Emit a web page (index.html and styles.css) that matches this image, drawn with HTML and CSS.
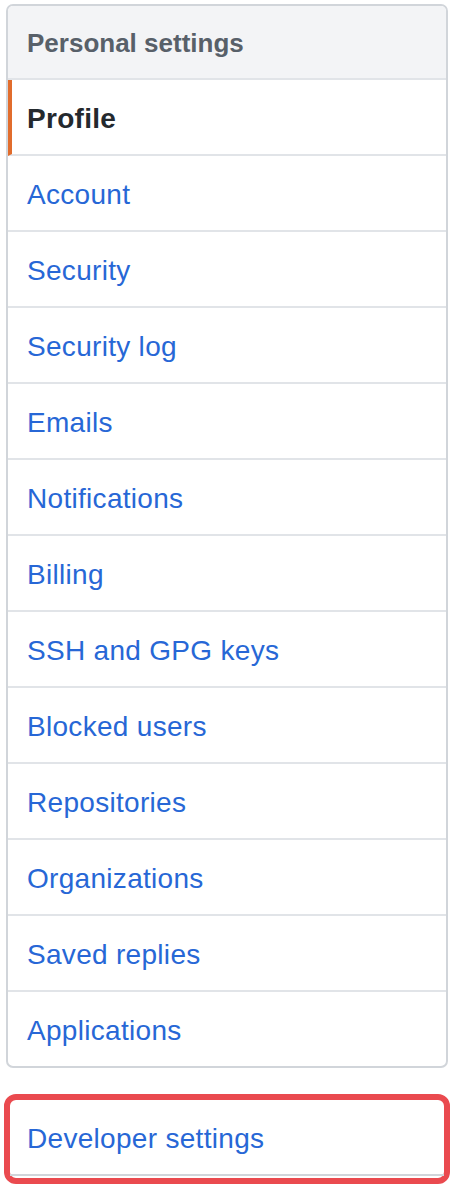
FILE: index.html
```html
<!DOCTYPE html>
<html lang="en">

<head>
    <meta charset="UTF-8">
    <meta name="viewport" content="width=device-width, initial-scale=1.0">
    <title>
        Settings menu
    </title>
    <link rel="stylesheet" href="styles.css">
</head>
<body>
<nav class="menu">
  <h3 class="menu-heading">Personal settings</h3>
  <a class="menu-item selected" href="#">Profile</a>
  <a class="menu-item" href="#">Account</a>
  <a class="menu-item" href="#">Security</a>
  <a class="menu-item" href="#">Security log</a>
  <a class="menu-item" href="#">Emails</a>
  <a class="menu-item" href="#">Notifications</a>
  <a class="menu-item" href="#">Billing</a>
  <a class="menu-item" href="#">SSH and GPG keys</a>
  <a class="menu-item" href="#">Blocked users</a>
  <a class="menu-item" href="#">Repositories</a>
  <a class="menu-item" href="#">Organizations</a>
  <a class="menu-item" href="#">Saved replies</a>
  <a class="menu-item" href="#">Applications</a>
</nav>

<div class="highlight">
  <a class="menu-item dev" href="#">Developer settings</a>
</div>
</body>
</html>
```

FILE: styles.css
```css
body {
    font-family: "Liberation Sans", Arial, sans-serif;
    background-color: #fff;
    margin: 0;
    padding: 4px 6px 0;
}

.menu {
    border: 2px solid #d1d5da;
    border-radius: 7px;
    overflow: hidden;
    display: flex;
    flex-direction: column;
}

.menu-heading {
    margin: 0;
    height: 70px;
    padding-top: 2px;
    display: flex;
    align-items: center;
    padding-left: 19px;
    background-color: #f3f4f6;
    border-bottom: 2px solid #e1e4e8;
    color: #586069;
    font-size: 26px;
    font-weight: bold;
}

.menu-item {
    height: 70px;
    padding-top: 4px;
    display: flex;
    align-items: center;
    padding-left: 19px;
    border-bottom: 2px solid #e1e4e8;
    color: #2767d6;
    font-size: 28px;
    letter-spacing: 0.3px;
    text-decoration: none;
}

.menu-item:last-child {
    border-bottom: none;
}

.menu-item.selected {
    border-left: 4px solid #e16c2c;
    padding-left: 15px;
    color: #24292e;
    font-weight: bold;
}

.highlight {
    margin: 26px -2px 0;
    border: 6px solid #ea4a4f;
    border-radius: 12px;
    padding-bottom: 2px;
}

.menu-item.dev {
    padding-left: 17px;
    border-bottom: 2px solid #d1d5da;
}
```
